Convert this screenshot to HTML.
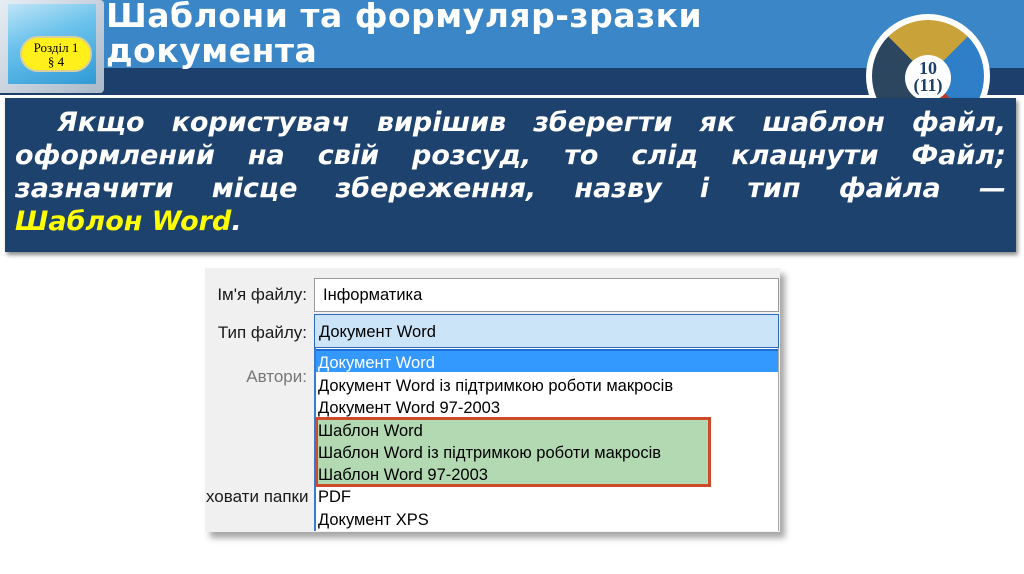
<!DOCTYPE html>
<html><head><meta charset="utf-8"><style>
*{margin:0;padding:0;box-sizing:border-box}
body{width:1024px;height:574px;background:#fff;position:relative;overflow:hidden;font-family:"Liberation Sans",sans-serif}
.abs{position:absolute}
#top{left:0;top:0;width:1024px;height:68px;background:#3a86c6}
#band{left:0;top:68px;width:1024px;height:27px;background:#1c3f6b}
#title{left:106px;top:-2px;color:#fff;font:bold 33px/35px "DejaVu Sans",sans-serif;letter-spacing:0.5px}
#box{left:5px;top:98px;width:1011px;height:154px;background:#1e426e;box-shadow:2px 3px 4px rgba(0,0,0,.45);padding:8px 10px 0 10px}
#box div{color:#fff;font:italic bold 27px/33px "DejaVu Sans",sans-serif;text-align:justify;text-align-last:justify;white-space:nowrap}
#box div.l{text-align-last:left}
.y{color:#ffff00}
.dlg{font-size:17px;color:#1a1a1a}
.it{position:absolute;left:4px;white-space:nowrap;font-size:16.5px;line-height:22px}
</style></head><body>
<div id="top" class="abs"></div>
<div id="band" class="abs"></div>
<div class="abs" style="left:-4px;top:0;width:108px;height:93px;background:linear-gradient(135deg,#e8eef5,#aab8c8);border-radius:4px"></div>
<div class="abs" style="left:8px;top:4px;width:88px;height:80px;background:linear-gradient(160deg,#bfe4f7 0%,#6cc3ec 40%,#2f9ad6 100%)"></div>
<div class="abs" style="left:20px;top:36px;width:72px;height:36px;background:#ffef1a;border-radius:18px;border:2px solid #d9d0a0;text-align:center;font:13px/14px 'Liberation Serif',serif;color:#000;padding-top:3px">Розділ 1<br>§ 4</div>
<div id="title" class="abs">Шаблони та формуляр-зразки<br>документа</div>
<div class="abs" style="left:866px;top:14px;width:124px;height:124px;border-radius:50%;background:#fff"></div>
<div class="abs" style="left:872px;top:20px;width:112px;height:112px;border-radius:50%;background:conic-gradient(from -45deg,#c9a23a 0 90deg,#2e7fc8 90deg 180deg,#b53a2a 180deg 200deg,#2c4660 200deg 360deg)"></div>
<div class="abs" style="left:905px;top:55px;width:46px;height:46px;border-radius:50%;background:#fff;text-align:center;font:bold 18px/17px 'Liberation Serif',serif;color:#1c3f6b;padding-top:5px">10<br>(11)</div>
<div id="box" class="abs">
<div style="padding-left:42px">Якщо користувач вирішив зберегти як шаблон файл,</div>
<div>оформлений на свій розсуд, то слід клацнути Файл;</div>
<div>зазначити місце збереження, назву і тип файла —</div>
<div class="l"><span class="y">Шаблон Word</span>.</div>
</div>
<div class="abs" style="left:205px;top:268px;width:575px;height:264px;background:#f0f0f0;box-shadow:5px 6px 6px rgba(0,0,0,.35)"></div>
<div class="abs dlg" style="left:200px;top:285px;width:107px;text-align:right">Ім'я файлу:</div>
<div class="abs dlg" style="left:200px;top:323px;width:107px;text-align:right">Тип файлу:</div>
<div class="abs dlg" style="left:200px;top:367px;width:107px;text-align:right;color:#777">Автори:</div>
<div class="abs dlg" style="left:206px;top:487px;width:107px;overflow:hidden;white-space:nowrap">ховати папки</div>
<div class="abs" style="left:314px;top:278px;width:465px;height:34px;background:#fff;border:1px solid #999"><span class="it" style="left:8px;top:5px">Інформатика</span></div>
<div class="abs" style="left:314px;top:314px;width:465px;height:34px;background:#cce4f7;border:1px solid #2a6ab8"><span class="it" style="top:6px">Документ Word</span></div>
<div class="abs" style="left:314px;top:348px;width:465px;height:183px;background:#fff;border-left:2px solid #3a7ad0;border-right:1px solid #aaa"></div>
<div class="abs" style="left:316px;top:349px;width:462px;height:23px;background:#3399ff;border-top:2px solid #1c6fd0"></div>
<div class="abs" style="left:315px;top:417px;width:396px;height:70px;background:#b3d9b3;border:3px solid #cf4a28"></div>
<div class="abs" style="left:314px;top:352px">
<span class="it" style="top:0;color:#fff">Документ Word</span>
<span class="it" style="top:23px">Документ Word із підтримкою роботи макросів</span>
<span class="it" style="top:45px">Документ Word 97-2003</span>
<span class="it" style="top:68px">Шаблон Word</span>
<span class="it" style="top:90px">Шаблон Word із підтримкою роботи макросів</span>
<span class="it" style="top:112px">Шаблон Word 97-2003</span>
<span class="it" style="top:134px">PDF</span>
<span class="it" style="top:157px">Документ XPS</span>
</div>
</body></html>
